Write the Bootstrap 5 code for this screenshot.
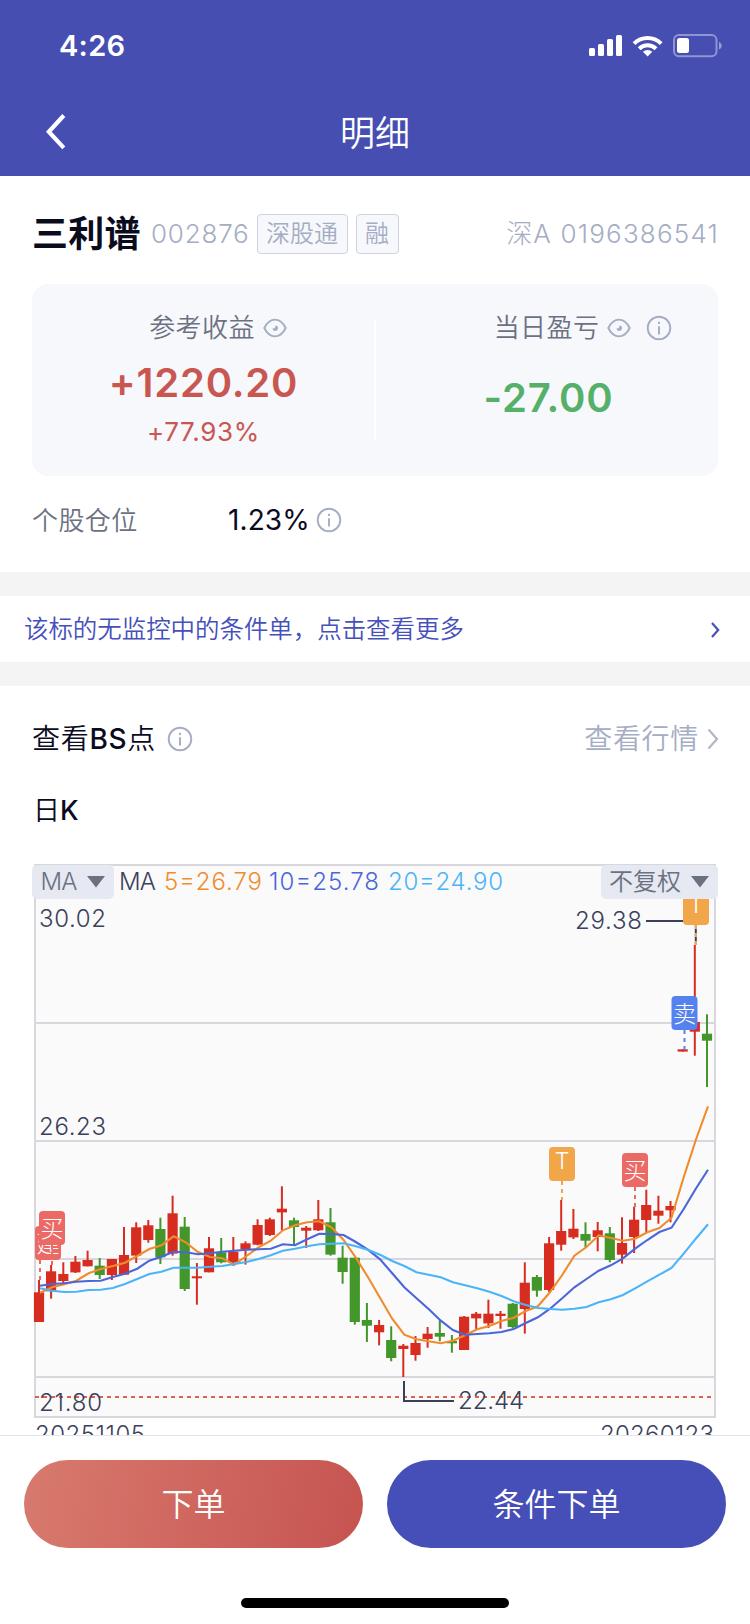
<!DOCTYPE html>
<html lang="zh-CN">
<head>
<meta charset="utf-8">
<meta name="viewport" content="width=device-width, initial-scale=1">
<title>明细</title>
<link href="https://cdn.jsdelivr.net/npm/bootstrap@5.3.0/dist/css/bootstrap.min.css" rel="stylesheet">
<style>
  :root { --brand: #464eb2; --ink: #0b0b1e; --sub: #6c7182; --pale: #a5adc4; --up: #c95751; --down: #55b069; }
  body { font-family: Inter, "Noto Sans CJK SC", sans-serif; font-weight: 350; color: var(--ink); background: #fff; line-height: 1; }
  .screen { width: 750px; height: 1624px; overflow: hidden; }
  .topbar { height: 176px; background: var(--brand); }
  .status { height: 92px; padding: 0 28px 0 59px; }
  .clock { font-size: 29px; font-weight: 600; letter-spacing: .3px; padding-bottom: 2px; }
  .titlebar { height: 84px; }
  .titlebar .back { left: 45px; top: 20px; }
  .page-title { font-size: 35px; padding-bottom: 2px; }
  .quote { height: 108px; padding: 8px 32px 0; }
  .stock-name { font-size: 36px; font-weight: 700; width: 107px; letter-spacing: .3px; }
  .code { font-size: 26px; font-weight: 300; color: var(--pale); letter-spacing: .8px; }
  .acct { letter-spacing: 1.2px; margin-right: -1px; }
  .tag { height: 40px; font-size: 24px; padding: 0 8.5px; color: var(--pale); background: #f7f8fc; border: 1px solid #cfd3e1; border-radius: 4px; }
  .tag-first { margin-left: 7px; }
  .summary { height: 192px; margin: 0 32px; background: #f7f8fc; border-radius: 16px; }
  .summary .rule { width: 2px; height: 120px; top: 36px; left: 342px; background: #fff; }
  .label { font-size: 26px; color: var(--sub); letter-spacing: .4px; }
  .amount { font-size: 40px; font-weight: 600; letter-spacing: .8px; }
  .pct { font-size: 26px; font-weight: 400; letter-spacing: .7px; }
  .share { font-size: 28px; font-weight: 400; letter-spacing: .1px; }
  .up { color: var(--up); } .down { color: var(--down); }
  .position-row { height: 96px; padding: 0 32px 8px; }
  .band { height: 24px; background: #f4f4f5; }
  .notice { height: 66px; padding: 1px 30px 0 24px; font-size: 24.45px; color: #4650ba; }
  .section-head { height: 104px; padding: 1px 32px 0; font-size: 28px; letter-spacing: .7px; }
  .period { height: 66px; padding: 0 32px 26px 33px; font-size: 27px; }
  .chart-wrap { height: 579px; }
  .legend-row { left: 32px; right: 32px; top: 9px; height: 34px; font-size: 24px; }
  .pick { height: 34px; background: #e6e9f1; border-radius: 5px; color: var(--sub); padding: 0 9px 0 8.500px; }
  .pick-ma { letter-spacing: -.8px; }
  .actions { height: 189px; border-top: 1px solid #e4e4ef; padding: 24px 24px 0; }
  .pill { height: 88px; border-radius: 44px; font-size: 32px; font-weight: 350; color: #fff; border: 0; }
  .pill span { position: relative; top: 1px; }
  .pill.sell { background: linear-gradient(100deg, #d87a6e, #c65450); }
  .pill.cond { background: #464eb8; }
  .home { width: 268px; height: 10px; border-radius: 5px; background: #000; margin-top: 50px; }
  svg { display: block; flex: none; }
  .chart text { font-size: 24px; fill: #3b3f5a; font-weight: 300; }
</style>
</head>
<body>
<svg width="0" height="0" class="position-absolute">
  <symbol id="eye" viewBox="0 0 24 20"><path d="M1.3 10C4 4.500 8 1.600 12 1.600S20 4.500 22.700 10C20 15.500 16 18.400 12 18.400S4 15.500 1.300 10z" fill="none" stroke="#a5adc4" stroke-width="1.900"/><path d="M12.700 7.200A2.900 2.900 0 1 1 9.300 10.600C11.500 10.600 12.700 9.200 12.700 7.200z" fill="#a5adc4"/></symbol>
  <symbol id="info" viewBox="0 0 26 26"><circle cx="13" cy="13" r="11.300" fill="none" stroke="#a5adc4" stroke-width="1.900"/><path d="M13 11.200v8.200M13 6.800v2.300" stroke="#a5adc4" stroke-width="1.900"/></symbol>
</svg>
<div class="screen d-flex flex-column">
  <header class="topbar text-white">
    <div class="status d-flex align-items-center justify-content-between">
      <span class="clock">4:26</span>
      <svg width="134" height="24" viewBox="588 34 134 24" fill="#fff">
        <rect x="589" y="48" width="6" height="8" rx="1.500"/><rect x="598" y="44" width="6" height="12" rx="1.500"/><rect x="607" y="39" width="6" height="17" rx="1.500"/><rect x="616" y="35" width="6" height="21" rx="1.500"/>
        <g fill="none" stroke="#fff" stroke-width="4"><path d="M634 43.600a19.500 19.500 0 0 1 27.200 0"/><path d="M639.200 48.800a12 12 0 0 1 16.800 0"/></g>
        <path d="M647.600 56.500l-4.700-4.700a6.800 6.800 0 0 1 9.400 0z"/>
        <rect x="674" y="35" width="42.500" height="21.300" rx="5" fill="none" stroke="#fff" stroke-opacity=".4" stroke-width="2"/>
        <rect x="677" y="38" width="12" height="15" rx="2.500"/>
        <path d="M719 42v7.500c3.600-1.600 3.600-5.900 0-7.500z" fill-opacity=".45"/>
      </svg>
    </div>
    <div class="titlebar position-relative d-flex align-items-center justify-content-center">
      <svg class="back position-absolute" width="24" height="40" viewBox="0 0 24 40"><path d="M18.800 3.500L3.800 19.700l15 16.200" fill="none" stroke="#fff" stroke-width="4.200"/></svg>
      <div class="page-title">明细</div>
    </div>
  </header>

  <section class="quote d-flex align-items-center">
    <span class="stock-name text-nowrap">三利谱</span>
    <span class="code ms-2 ps-1">002876</span>
    <span class="tag tag-first d-flex align-items-center">深股通</span>
    <span class="tag d-flex align-items-center ms-2">融</span>
    <span class="code ms-auto acct">深A 0196386541</span>
  </section>

  <section class="summary position-relative d-flex">
    <div class="w-50 d-flex flex-column align-items-center">
      <div class="label d-flex align-items-center" style="margin:31px 0 0 29px">参考收益<svg class="ms-2" width="24" height="20"><use href="#eye"/></svg></div>
      <div class="amount up" style="margin-top:22px">+1220.20</div>
      <div class="pct up" style="margin-top:16px">+77.93%</div>
    </div>
    <div class="w-50 d-flex flex-column align-items-center">
      <div class="label d-flex align-items-center" style="margin:31px 0 0 73px">当日盈亏<svg class="ms-2" width="24" height="20"><use href="#eye"/></svg><svg width="26" height="26" style="margin-left:15px"><use href="#info"/></svg></div>
      <div class="amount down" style="margin:37px 0 0 4px">-27.00</div>
    </div>
    <div class="rule position-absolute"></div>
  </section>

  <section class="position-row d-flex align-items-center">
    <span class="label" style="width:196px;padding-top:1px">个股仓位</span>
    <span class="share">1.23%</span>
    <svg width="26" height="26" style="margin-left:6px"><use href="#info"/></svg>
  </section>
  <div class="band"></div>
  <section class="notice d-flex align-items-center justify-content-between">
    <span>该标的无监控中的条件单，点击查看更多</span>
    <svg width="9" height="16" viewBox="0 0 9 16"><path d="M1 1l6.200 7L1 15" fill="none" stroke="#4650ba" stroke-width="2.200"/></svg>
  </section>
  <div class="band"></div>

  <section>
    <div class="section-head d-flex align-items-center">
      <span>查看<span style="font-weight:500">BS</span>点</span>
      <svg width="26" height="26" style="margin-left:11px"><use href="#info"/></svg>
      <span class="ms-auto" style="color:var(--pale)">查看行情</span>
      <svg width="12" height="22" viewBox="0 0 12 22" style="margin-left:8px;margin-right:-1px"><path d="M1.500 1.500L10 11l-8.500 9.500" fill="none" stroke="#b4b8c6" stroke-width="2.300"/></svg>
    </div>
    <div class="period d-flex align-items-center"><span>日<span style="font-weight:500">K</span></span></div>
  </section>

  <section class="chart-wrap position-relative">
    <svg class="chart" id="kline" width="750" height="579" viewBox="0 856 750 579"></svg>
    <div class="legend-row position-absolute d-flex align-items-center">
      <div class="pick pick-ma d-flex align-items-center">MA<svg width="18" height="12" style="margin-left:10px"><path d="M0 0h18L9 11.500z" fill="#6c7182"/></svg></div>
      <div class="pick d-flex align-items-center ms-auto">不复权<svg width="18" height="12" style="margin-left:10px"><path d="M0 0h18L9 11.500z" fill="#6c7182"/></svg></div>
    </div>
  </section>

  <footer class="actions bg-white">
    <div class="d-flex gap-4">
      <button class="btn pill sell flex-fill w-50 p-0"><span>下单</span></button>
      <button class="btn pill cond flex-fill w-50 p-0"><span>条件下单</span></button>
    </div>
    <div class="home mx-auto"></div>
  </footer>
</div>
<script src="https://cdn.jsdelivr.net/npm/bootstrap@5.3.0/dist/js/bootstrap.bundle.min.js"></script>
<script>
  const X = i => 39 + i * 12.145;
  // [high, body top, body bottom, low, rising]; values are thirds of a pixel from each block's base
  const blocks = [
    [1120, [[480,517,606,606,1],[435,454,514,536,1],[427,462,483,495,1],[408,425,457,459,1],[392,420,439,439,1],[414,437,465,477,0],[417,417,465,480,1],[321,405,464,464,1],[307,322,407,429,1],[300,316,360,368,1],[293,327,412,432,0],[227,280,401,407,1],[291,320,507,513,0],[429,469,475,554,1],[351,385,457,457,1],[354,397,427,430,0],[351,395,427,437,1],[364,370,388,434,1]]],
    [1160, [[178,195,254,256,1],[173,178,225,228,1],[79,146,157,211,1],[173,181,201,255,0],[198,203,212,264,1],[120,178,211,213,1],[144,187,284,287,0],[257,293,336,371,0],[293,293,486,494,0],[429,480,497,546,0],[480,495,517,556,1],[499,540,594,604,0],[552,557,567,651,1],[528,549,585,602,1],[501,521,537,563,1],[481,519,530,544,0],[525,543,550,578,0],[468,470,570,570,1],[456,461,475,508,1]]],
    [1100, [[599,641,670,684,1],[633,641,648,686,1],[609,611,681,685,0],[487,548,627,701,1],[525,531,572,590,0],[411,430,570,576,1],[300,393,434,452,1],[327,386,412,417,1],[367,402,422,442,0],[366,391,411,454,1],[381,400,480,487,0],[352,429,464,491,1],[320,359,411,459,1],[269,315,360,398,1],[287,332,347,371,1],[303,318,331,367,1]]],
    [850, [[598,598,605,605,1],[285,516,545,617,1],[493,551,572,711,0]]]
  ];
  const averages = [
    ['#f08c2d', [[1120,[518,502,493,482,460,447,438,428,408,387,376,349,367,396,411,415,434,408]],[1160,[262,242,211,196,187,184,202,240,293,351,414,476,524,538,544,550,542,526,508]],[1100,[678,663,653,633,619,576,525,467,441,406,414,422,416,397,384,353,232,120,19]]]],
    ['#4a66d9', [[1120,[497,492,490,485,483,482,471,461,446,422,410,395,397,403,400,395,392,389]],[1160,[268,266,253,256,238,221,222,225,246,269,298,340,382,415,447,482,510,524,522]],[1100,[700,696,687,669,652,626,595,562,537,512,496,475,446,420,396,383,327,266,209]]]],
    ['#4bb4f7', [[1120,[505,512,516,515,510,509,504,492,477,462,455,443,443,443,440,438,432,426]],[1160,[297,286,272,266,259,253,251,250,259,269,284,303,318,337,344,352,367,376,385]],[1100,[575,588,604,615,624,627,629,626,621,607,598,585,565,544,524,504,461,416,373]]]]
  ];
  const t = (s, x, y, w, extra = '') => `<text x="${x}" y="${y}" textLength="${w}" ${extra}>${s}</text>`;
  const rect = (x, y, w, h, c, r = 0) => `<rect x="${x}" y="${y}" width="${w}" height="${h}" fill="${c}" rx="${r}"/>`;
  const line = (d, c, w = 2, extra = '') => `<path d="${d}" fill="none" stroke="${c}" stroke-width="${w}" ${extra}/>`;
  let out = rect(35, 865, 680, 552, '#fafafb');
  [1023, 1141, 1259, 1377].forEach(y => out += line(`M35 ${y}H715`, '#d7d7dd'));
  out += line('M35 865H715V1417H35z', '#d7d7dd');
  let i = 0;
  for (const [base, rows] of blocks) for (const [h, a, b, l, up] of rows) {
    const c = up ? '#d62d20' : '#43962a', x = X(i++), y = v => base + v / 3;
    out += rect((x - 1).toFixed(1), y(h).toFixed(1), 2, ((l - h) / 3).toFixed(1), c);
    out += rect((x - 5.1).toFixed(1), y(a).toFixed(1), 10.2, ((b - a) / 3).toFixed(1), c);
  }
  for (const [c, parts] of averages) {
    let n = 0;
    const pts = parts.flatMap(([base, vs]) => vs.map(v => `${(X(n++) + 1).toFixed(1)},${(base + v / 3).toFixed(1)}`));
    out += `<polyline points="${pts.join(' ')}" fill="none" stroke="${c}" stroke-width="2.1"/>`;
  }
  out += line('M35 1397H711', '#e0614f', 2, 'stroke-dasharray="4 4"');
  out += line('M404 1381V1401H454', '#3b3f5a') + line('M646 921H684', '#3b3f5a');
  const flag = (s, x, y, c, to, off = 13) => line(`M${x + off} ${y + 34}V${to}`, c, 2, 'stroke-dasharray="4 4"') + rect(x, y, 26, 34, c, 4) +
    `<text x="${x + 13}" y="${y + (s === 'T' ? 22 : 25.5)}" text-anchor="middle" style="font-size:23px;fill:#fff">${s}</text>`;
  out += line('M695.8 925V945', '#3b3f5a');
  out += flag('T', 683, 891, '#f2a64a', 945) + flag('卖', 671.5, 996, '#5682f0', 1050);
  out += flag('T', 549, 1147, '#f2a64a', 1200) + flag('买', 622, 1153, '#ec6a66', 1207);
  out += flag('建', 35, 1226, '#ec6a66', 1280, 5) + flag('买', 39, 1211, '#ec6a66', 1266);
  out += t('MA', 119, 890, 37) + t('5=26.79', 164, 890, 98, 'style="fill:#f08c2d"') + t('10=25.78', 269, 890, 110, 'style="fill:#4a66d9"') + t('20=24.90', 388, 890, 115, 'style="fill:#4bb4f7"');
  out += t('30.02', 39, 927, 67) + t('26.23', 39, 1135, 67) + t('21.80', 39, 1411, 63) + t('22.44', 458, 1409, 66) + t('29.38', 575, 929, 67);
  out += t('20251105', 35, 1443, 110) + t('20260123', 600, 1443, 114);
  document.getElementById('kline').innerHTML = out;
</script>
</body>
</html>
